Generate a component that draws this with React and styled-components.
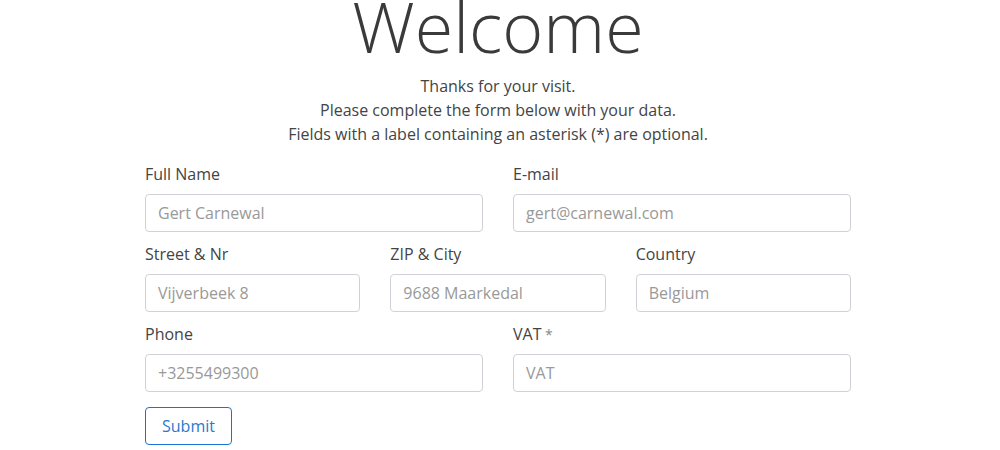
import React from 'react';
import styled, { createGlobalStyle } from 'styled-components';

const GlobalStyle = createGlobalStyle`
    body {
        margin: 0;
        font-family: "Open Sans", "Liberation Sans", sans-serif;
        font-size: 16px;
        line-height: 24px;
        color: #444;
        background: #fff;
    }
    * { box-sizing: border-box; }
`

const Page = styled.div`
    width: 996px;
    display: flex;
    flex-direction: column;
    align-items: center;
`

const Title = styled.h1`
    margin: -9px 0 13px;
    font-size: 70px;
    line-height: 70px;
    font-weight: 300;
    color: #3a3a3a;
`

const Intro = styled.p`
    margin: 0 0 16px;
    text-align: center;
    color: #444;
`

const Form = styled.form`
    width: 706px;
    display: flex;
    flex-direction: column;
`

const Row = styled.div`
    display: grid;
    grid-template-columns: repeat(${p => p.cols}, minmax(0, 1fr));
    column-gap: 30px;
    margin-bottom: 10px;
`

const Field = styled.div`
    display: flex;
    flex-direction: column;
    min-width: 0;
`

const Label = styled.label`
    height: 24px;
    margin-bottom: 8px;
    color: #444;
`

const Optional = styled.span`
    color: #888;
    font-size: 14px;
    line-height: 1;
`

const Input = styled.input`
    width: 100%;
    min-width: 0;
    height: 38px;
    padding: 0 12px;
    border: 1px solid #cfd3d8;
    border-radius: 4px;
    font-family: inherit;
    font-size: 16px;
    color: #444;
    &::placeholder { color: #999; }
`

const SubmitButton = styled.button`
    align-self: flex-start;
    margin-top: 5px;
    height: 38px;
    padding: 0 16px;
    border: 1px solid #1a73d0;
    border-radius: 4px;
    background: #fff;
    color: #2a78d2;
    font-family: inherit;
    font-size: 16px;
`

const rows = [
    [
        { label: 'Full Name', ph: 'Gert Carnewal' },
        { label: 'E-mail', ph: 'gert@carnewal.com' },
    ],
    [
        { label: 'Street & Nr', ph: 'Vijverbeek 8' },
        { label: 'ZIP & City', ph: '9688 Maarkedal' },
        { label: 'Country', ph: 'Belgium' },
    ],
    [
        { label: 'Phone', ph: '+3255499300' },
        { label: 'VAT', ph: 'VAT', optional: true },
    ],
]

export default function App() {
    return (
        <Page>
            <GlobalStyle />
            <Title>Welcome</Title>
            <Intro>
                Thanks for your visit.<br />
                Please complete the form below with your data.<br />
                Fields with a label containing an asterisk (*) are optional.
            </Intro>
            <Form onSubmit={e => e.preventDefault()}>
                {rows.map((fields, i) => (
                    <Row key={i} cols={fields.length}>
                        {fields.map(f => (
                            <Field key={f.label}>
                                <Label>
                                    {f.label}
                                    {f.optional && <Optional> *</Optional>}
                                </Label>
                                <Input placeholder={f.ph} />
                            </Field>
                        ))}
                    </Row>
                ))}
                <SubmitButton type="submit">Submit</SubmitButton>
            </Form>
        </Page>
    );
}
